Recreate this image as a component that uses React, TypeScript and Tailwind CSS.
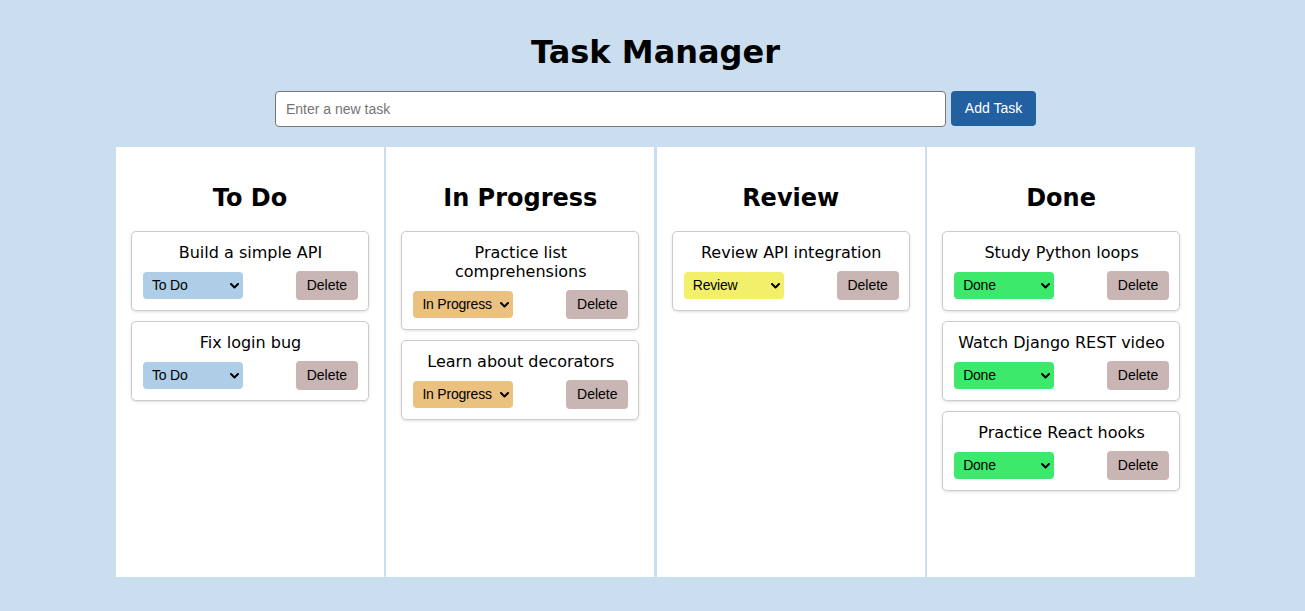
import React, { useState } from "react";

type Status = "To Do" | "In Progress" | "Review" | "Done";

const STATUSES: Status[] = ["To Do", "In Progress", "Review", "Done"];

const SELECT_BG: Record<Status, string> = {
  "To Do": "bg-[#aecde6]",
  "In Progress": "bg-[#ebc17f]",
  Review: "bg-[#f2f06a]",
  Done: "bg-[#3ce96b]",
};

interface Task {
  id: number;
  title: string;
  status: Status;
}

const initial: Task[] = [
  { id: 1, title: "Build a simple API", status: "To Do" },
  { id: 2, title: "Fix login bug", status: "To Do" },
  { id: 3, title: "Practice list comprehensions", status: "In Progress" },
  { id: 4, title: "Learn about decorators", status: "In Progress" },
  { id: 5, title: "Review API integration", status: "Review" },
  { id: 6, title: "Study Python loops", status: "Done" },
  { id: 7, title: "Watch Django REST video", status: "Done" },
  { id: 8, title: "Practice React hooks", status: "Done" },
];

function Chevron() {
  return (
    <svg width="9" height="6" viewBox="0 0 9 6" className="pointer-events-none absolute right-[4px] top-1/2 -translate-y-1/2">
      <path d="M1 1 L4.5 4.5 L8 1" fill="none" stroke="#000" strokeWidth="2" strokeLinecap="round" strokeLinejoin="round" />
    </svg>
  );
}

function TaskCard({
  task,
  onChange,
  onDelete,
}: {
  task: Task;
  onChange: (s: Status) => void;
  onDelete: () => void;
}) {
  return (
    <div className="rounded-[5px] border border-[#cccccc] bg-white pl-[11px] pr-[10px] pt-[11px] pb-[10px] shadow-[0_1px_3px_rgba(0,0,0,0.12)]">
      <p className="mb-[9px] text-center text-[16px] leading-[19px] text-black [font-family:'DejaVu_Sans',Verdana,sans-serif]">
        {task.title}
      </p>
      <div className="flex h-[29px] items-center justify-between">
        <div className="relative">
          <select
            value={task.status}
            onChange={(e) => onChange(e.target.value as Status)}
            className={`block h-[27px] w-[100px] appearance-none rounded-[4px] pl-[9px] pr-[16px] text-[14px] tracking-[-0.2px] text-black outline-none [font-family:'Liberation_Sans',Arial,sans-serif] ${SELECT_BG[task.status]}`}
          >
            {STATUSES.map((s) => (
              <option key={s} value={s}>
                {s}
              </option>
            ))}
          </select>
          <Chevron />
        </div>
        <button
          onClick={onDelete}
          className="h-[29px] w-[62px] rounded-[4px] bg-[#c9b5b3] text-center text-[14px] text-black [font-family:'Liberation_Sans',Arial,sans-serif]"
        >
          Delete
        </button>
      </div>
    </div>
  );
}

export default function App() {
  const [tasks, setTasks] = useState<Task[]>(initial);
  const [text, setText] = useState("");

  const add = () => {
    if (!text.trim()) return;
    setTasks((t) => [...t, { id: Date.now(), title: text.trim(), status: "To Do" }]);
    setText("");
  };

  return (
    <div className="min-h-[611px] bg-[#cbdef0] pt-[34px] pb-[34px] pl-[6px]">
      <h1 className="text-center text-[32px] font-bold leading-[37px] text-black [font-family:'DejaVu_Sans',Verdana,sans-serif]">
        Task Manager
      </h1>
      <div className="mt-[20px] flex justify-center gap-[5px]">
        <input
          value={text}
          onChange={(e) => setText(e.target.value)}
          placeholder="Enter a new task"
          className="h-[36px] w-[671px] rounded-[4px] border border-[#767676] bg-white px-[10px] text-[14px] text-black outline-none placeholder:text-[#757575] [font-family:'Liberation_Sans',Arial,sans-serif]"
        />
        <button
          onClick={add}
          className="h-[35px] w-[85px] rounded-[4px] bg-[#2260a2] text-center text-[14px] text-white [font-family:'Liberation_Sans',Arial,sans-serif]"
        >
          Add Task
        </button>
      </div>
      <div className="mx-auto mt-[20px] grid w-[1079px] grid-cols-4 gap-[2.5px]">
        {STATUSES.map((col) => (
          <div key={col} className="min-h-[430px] bg-white px-[15px] pt-[15px] pb-[15px]">
            <h2 className="mt-[22px] mb-[18px] text-center text-[24px] font-bold leading-[29px] text-black [font-family:'DejaVu_Sans',Verdana,sans-serif]">
              {col}
            </h2>
            <div className="flex flex-col gap-[10px]">
              {tasks
                .filter((t) => t.status === col)
                .map((t) => (
                  <TaskCard
                    key={t.id}
                    task={t}
                    onChange={(s) => setTasks((all) => all.map((x) => (x.id === t.id ? { ...x, status: s } : x)))}
                    onDelete={() => setTasks((all) => all.filter((x) => x.id !== t.id))}
                  />
                ))}
            </div>
          </div>
        ))}
      </div>
    </div>
  );
}
